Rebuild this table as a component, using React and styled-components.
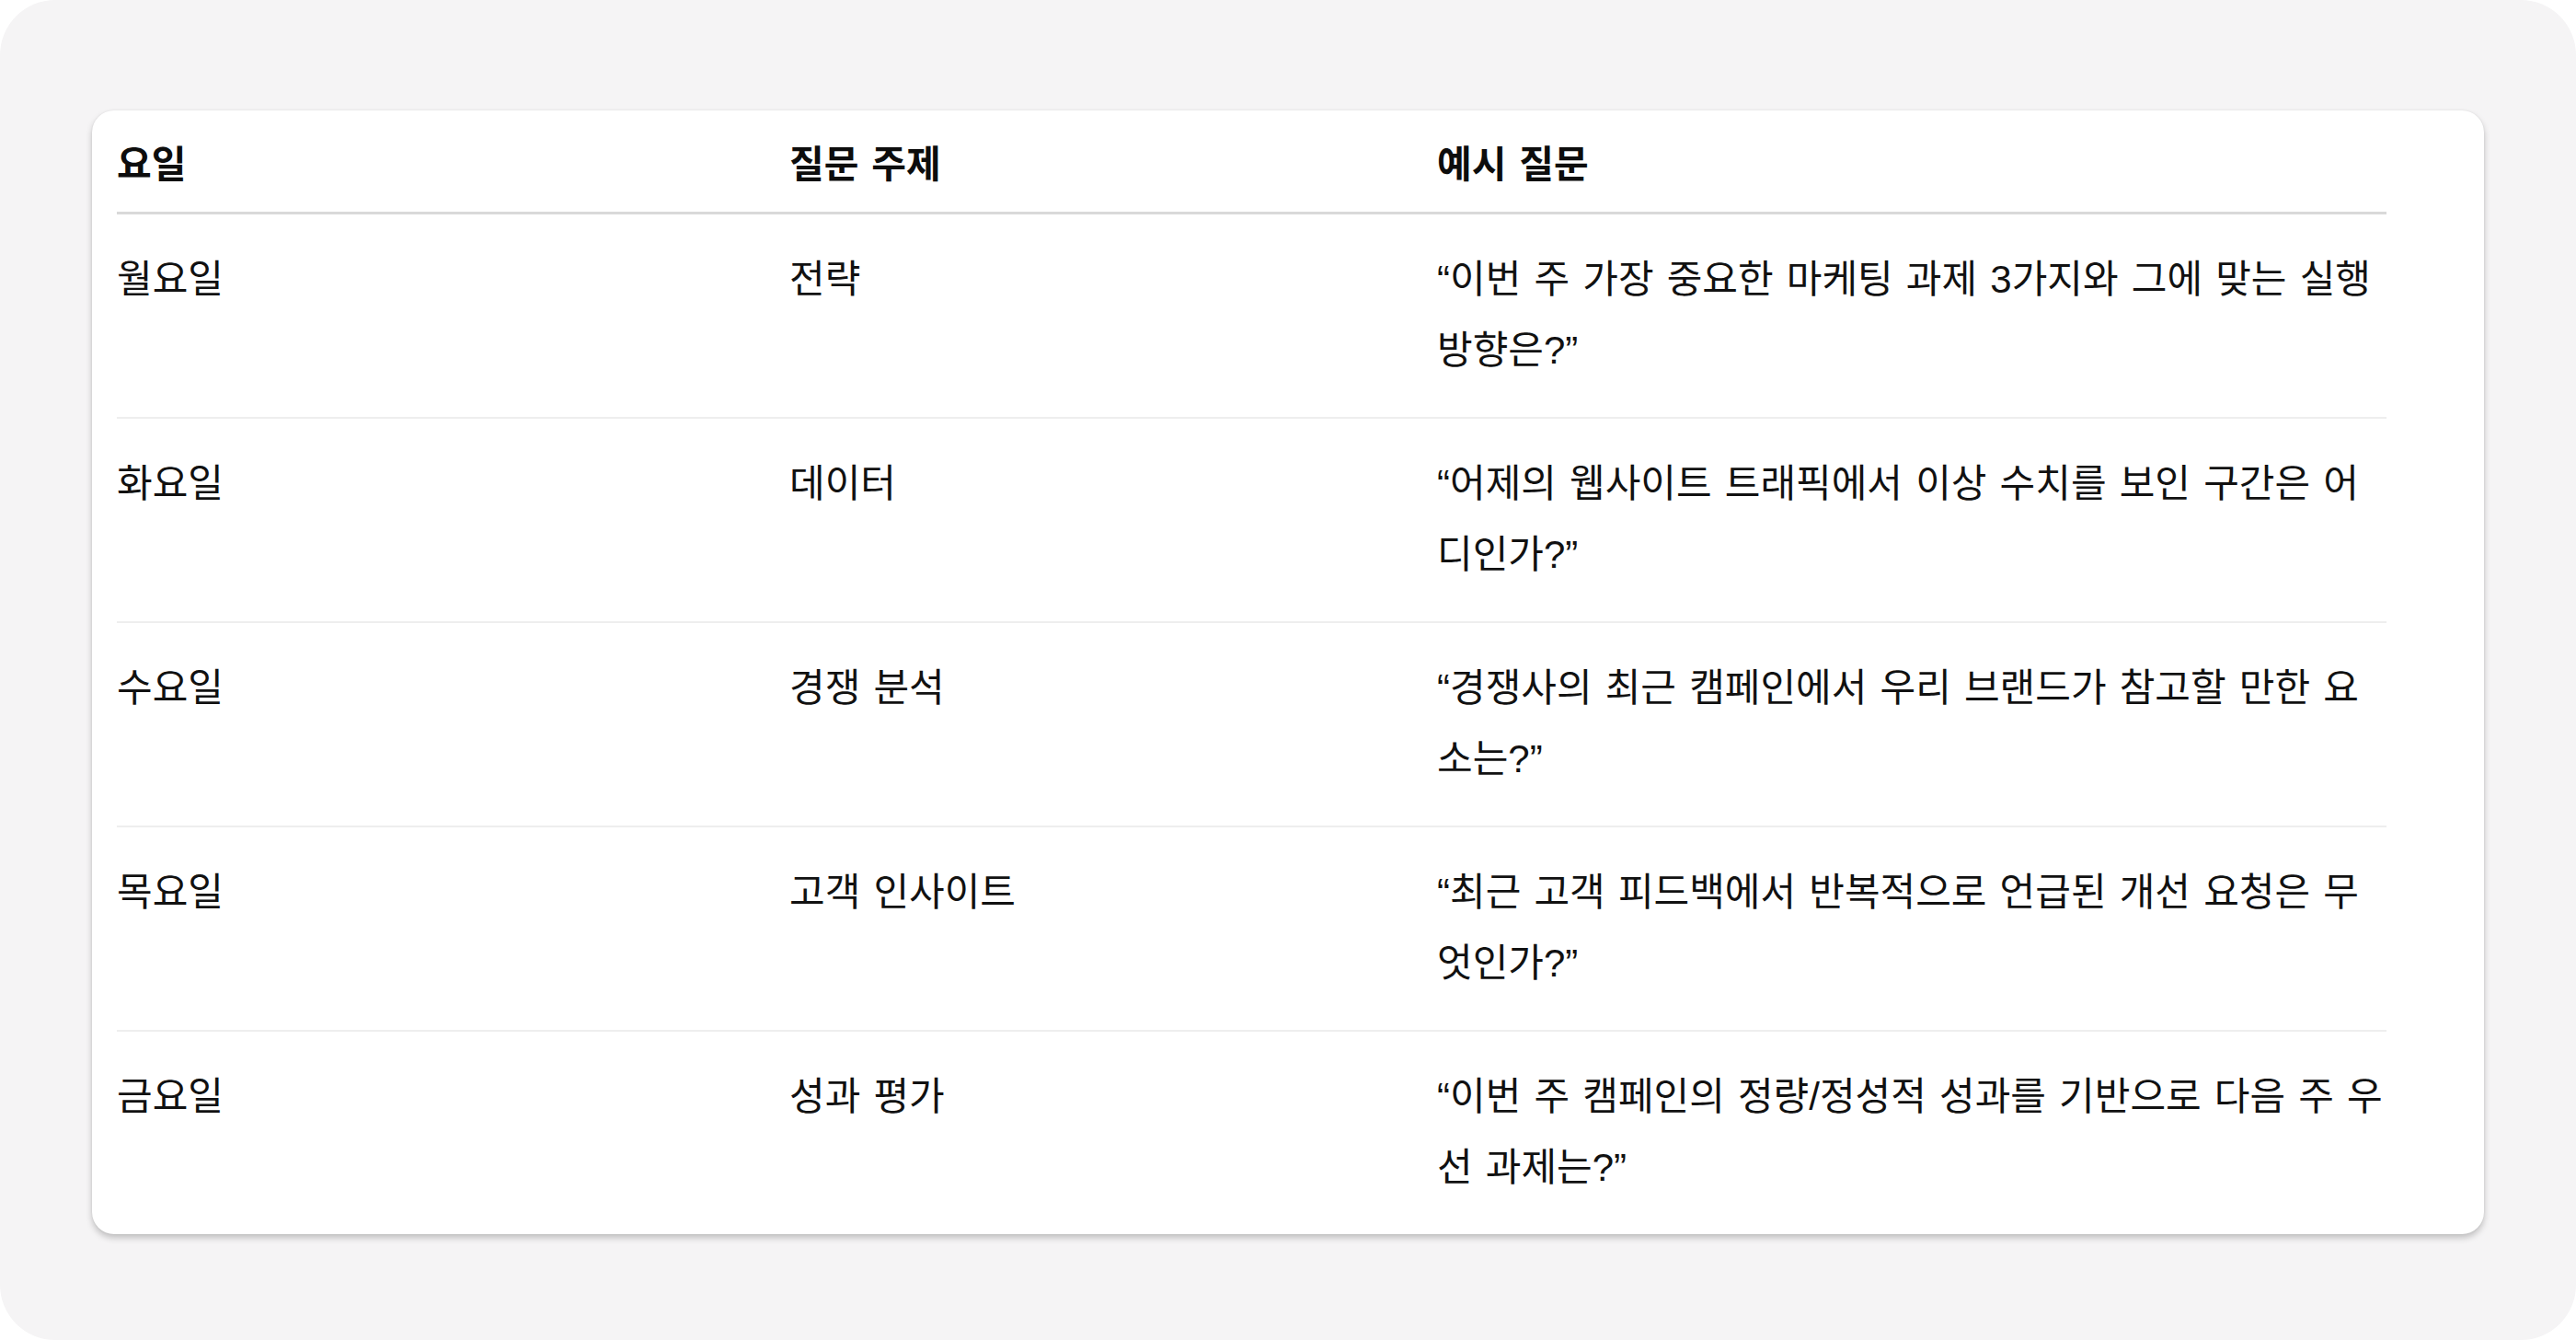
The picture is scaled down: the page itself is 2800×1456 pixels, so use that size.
import React from "react";
import styled, { createGlobalStyle } from "styled-components";

const GlobalStyle = createGlobalStyle`
  html, body {
    margin: 0;
    padding: 0;
    background: #ffffff;
  }
  body {
    font-family: "Liberation Sans", "Noto Sans CJK KR", sans-serif;
    color: #0d0d0d;
  }
`;

const Frame = styled.div`
  width: 2800px;
  height: 1456px;
  box-sizing: border-box;
  background: #f5f4f5;
  border-radius: 60px;
  padding: 120px 100px 0 100px;
`;

const Card = styled.div`
  background: #ffffff;
  border-radius: 24px;
  box-shadow: 0 4px 7px rgba(0, 0, 0, 0.22), 0 0 2px rgba(0, 0, 0, 0.08);
  padding: 0 106px 0 27px;
  overflow: hidden;
`;

const Table = styled.table`
  width: 100%;
  table-layout: fixed;
  border-collapse: collapse;
  font-family: "Liberation Sans", "Noto Sans CJK KR", sans-serif;
  font-size: 42px;
  line-height: 77px;
  word-spacing: 2.5px;
`;

const HeadCell = styled.th`
  width: ${(p) => p.$w}px;
  text-align: left;
  font-weight: 700;
  font-size: 41px;
  color: #0d0d0d;
  padding: 21px 0 12px 0;
  border-bottom: 3px solid #d9d9d9;
  vertical-align: top;
`;

const Row = styled.tr`
  border-bottom: ${(p) => (p.$last ? "none" : "2px solid #eeeeee")};
`;

const Cell = styled.td`
  padding: 32px 0 34px 0;
  vertical-align: top;
  color: #111111;
  font-weight: 400;
  word-break: normal;
  overflow-wrap: anywhere;
`;

const columns = [
  { label: "요일", w: 731 },
  { label: "질문 주제", w: 704 },
  { label: "예시 질문", w: 1032 },
];

const rows = [
  ["월요일", "전략", "“이번 주 가장 중요한 마케팅 과제 3가지와 그에 맞는 실행 방향은?”"],
  ["화요일", "데이터", "“어제의 웹사이트 트래픽에서 이상 수치를 보인 구간은 어디인가?”"],
  ["수요일", "경쟁 분석", "“경쟁사의 최근 캠페인에서 우리 브랜드가 참고할 만한 요소는?”"],
  ["목요일", "고객 인사이트", "“최근 고객 피드백에서 반복적으로 언급된 개선 요청은 무엇인가?”"],
  ["금요일", "성과 평가", "“이번 주 캠페인의 정량/정성적 성과를 기반으로 다음 주 우선 과제는?”"],
];

export default function App() {
  return (
    <>
      <GlobalStyle />
      <Frame>
        <Card>
          <Table>
            <thead>
              <tr>
                {columns.map((c) => (
                  <HeadCell key={c.label} $w={c.w}>
                    {c.label}
                  </HeadCell>
                ))}
              </tr>
            </thead>
            <tbody>
              {rows.map((r, i) => (
                <Row key={r[0]} $last={i === rows.length - 1}>
                  {r.map((t, j) => (
                    <Cell key={j}>{t}</Cell>
                  ))}
                </Row>
              ))}
            </tbody>
          </Table>
        </Card>
      </Frame>
    </>
  );
}
